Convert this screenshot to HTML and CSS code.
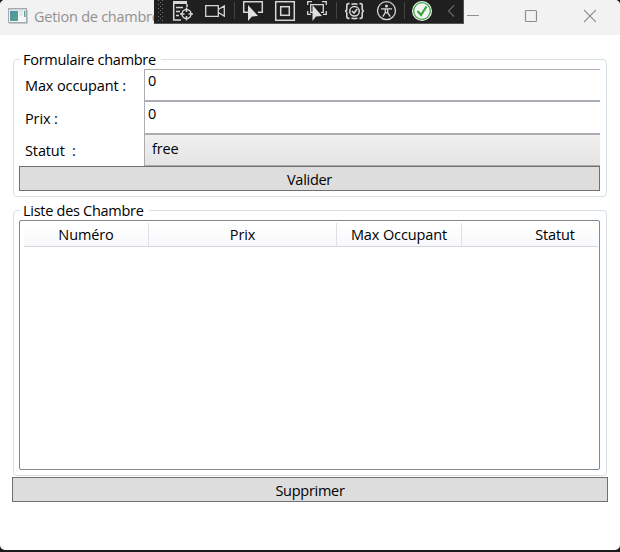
FILE: index.html
```html
<!DOCTYPE html>
<html lang="fr">
<head>
<meta charset="utf-8">
<title>Getion de chambre</title>
<link rel="stylesheet" href="styles.css">
</head>
<body>
<div class="window">
  <header class="titlebar">
    <svg class="app-icon" width="20" height="16" viewBox="0 0 20 16">
      <defs><linearGradient id="g" x1="0" y1="0" x2="1" y2="1"><stop offset="0" stop-color="#4a8fae"/><stop offset="1" stop-color="#5aa67c"/></linearGradient></defs>
      <rect x=".5" y=".5" width="18" height="14" fill="#f4f6fa" stroke="#a4a9b0"/>
      <rect x="1" y="1" width="17" height="1.5" fill="#cdd2da"/>
      <rect x="2" y="3" width="8" height="10" fill="url(#g)"/>
      <rect x="11" y="3" width="4" height="5" fill="#e3e7ee"/>
      <rect x="16" y="3" width="1.5" height="6" fill="#62a98f"/>
      <path d="M1 15.5H19.5V2" fill="none" stroke="#c4c7cb"/>
    </svg>
    <h1 class="title">Getion de chambre</h1>
    <svg class="controls" width="132" height="16" viewBox="0 0 132 16" fill="none" stroke="#8e8e8e">
      <path d="M3 7.5H15"/>
      <rect x="61.5" y="2.5" width="11" height="11" rx="1" stroke-width="1.2"/>
      <path d="M120 2L132 14M132 2L120 14" stroke-width="1.1"/>
    </svg>
  </header>
  <main class="content">
    <section class="group form-group">
      <h2 class="legend legend-form">Formulaire chambre</h2>
      <div class="form">
        <label class="label">Max occupant :</label><div class="input">0</div>
        <label class="label label-prix">Prix :</label><div class="input input-prix">0</div>
        <label class="label">Statut&nbsp; :</label><div class="select">free</div>
      </div>
      <button class="button">Valider</button>
    </section>
    <section class="group list-group">
      <h2 class="legend legend-list">Liste des Chambre</h2>
      <div class="list">
        <div class="list-head">
          <div class="col">Numéro</div>
          <div class="col">Prix</div>
          <div class="col">Max Occupant</div>
          <div class="col">Statut</div>
        </div>
      </div>
    </section>
    <button class="button remove">Supprimer</button>
  </main>
</div>
<div class="debugbar">
  <svg width="310" height="24" viewBox="154 0 310 24" fill="none" stroke="#d6d6d6" stroke-width="1.5">
    <defs><pattern id="dots" x="158" y="0" width="4" height="4" patternUnits="userSpaceOnUse"><path d="M0 0h1v1H0zM2 2h1v1H2z" fill="#777" stroke="none"/></pattern></defs>
    <rect x="158" y="0" width="6" height="22" fill="url(#dots)" stroke="none"/>
    <path d="M173 1H187V4H173Z" fill="#d6d6d6" stroke="none"/>
    <path d="M173.7 4V20H181M187 4V7M176 7.5H183M176 11.5H180M176 15.5H179"/>
    <circle cx="186.5" cy="14" r="4.5"/><path d="M186.5 7.5V12M186.5 16V20.5M180 14H184.5M188.5 14H193"/>
    <path d="M205.7 5.7H218.3V16.3H205.7ZM218.3 9.5L224.3 6V16L218.3 12.5" stroke-width="1.3"/>
    <path d="M234.5 2V19M336.5 2V19M404.5 2V19" stroke="#434343" stroke-width="1"/>
    <path d="M249 12.3H243.7V1.7H262.3V12.3H258"/>
    <path d="M248 5V21L252 16.5L258 16Z" fill="#e0e0e0" stroke="none"/>
    <rect x="275.7" y="1.7" width="18.6" height="18.6"/><rect x="280.7" y="6.7" width="8.6" height="8.6"/>
    <path d="M307.7 5V1.7H312M322 1.7H326.3V5M307.7 11V14.3H311M326.3 11V14.3H323M313 12.3H310.7V4.7H323.3V12.3H321" stroke-width="1.3"/>
    <path d="M312.5 5V21L316 16.5L322 16Z" fill="#e0e0e0" stroke="none"/>
    <path d="M349.5 3.6H348.5Q346.8 3.6 346.8 5.5V8.5Q346.8 11 345 11Q346.8 11 346.8 13.5V16.5Q346.8 18.4 348.5 18.4H349.5M359.5 3.6H360.5Q362.2 3.6 362.2 5.5V8.5Q362.2 11 364 11Q362.2 11 362.2 13.5V16.5Q362.2 18.4 360.5 18.4H359.5" stroke-width="1.6"/>
    <circle cx="354.5" cy="11.3" r="4.8" stroke-width="1.5"/>
    <path d="M352 11L354 13L357.2 9M351.5 4.5Q354.5 3 357.5 4.5M351.5 18Q354.5 19.3 357.5 18" stroke-width="1.6"/>
    <circle cx="386.5" cy="10.7" r="9" stroke-width="1.3"/><circle cx="386.5" cy="6" r="1.5" fill="#d6d6d6" stroke="none"/>
    <path d="M381 8.8H392M385.3 9V12.5L382.8 16.6M387.7 9V12.5L390.2 16.6M385 12.8H388" stroke-width="1.3"/>
    <circle cx="422" cy="11" r="10" fill="#f1f4f0" stroke="none"/><circle cx="422" cy="11" r="8.3" stroke="#42a447" stroke-width="1.3"/>
    <path d="M417.5 11L421 15L426.5 6.5" stroke="#36a33b" stroke-width="2.2"/>
    <path d="M454 5.5L448.5 11L454 16.5" stroke="#666" stroke-width="1.2"/>
  </svg>
</div>
</body>
</html>
```
FILE: styles.css
```css
* { box-sizing: border-box; }
body {
  margin: 0;
  height: 552px;
  overflow: hidden;
  background: #1c1c20;
  color: #000;
  font: 14.5px/20px "Open Sans", "Noto Sans", sans-serif;
  letter-spacing: -0.12px;
}
h1, h2 { margin: 0; font: inherit; }
.window {
  height: 550px;
  background: #fff;
  border-radius: 5px;
  overflow: hidden;
}
.titlebar {
  display: flex;
  height: 35px;
  padding: 8px 24px 0 8px;
  background: #f2f2f2;
}
.title {
  margin: -1px auto 0 6px;
  color: #919191;
  letter-spacing: -0.25px;
}
.content { padding: 24px 12px 0; }
.group {
  position: relative;
  margin: 0 0 0 1px;
  width: 594px;
  border: 1px solid #d5dfe5;
  border-radius: 4px;
}
.form-group { height: 138px; padding: 9px 6px 0 5px; }
.list-group { height: 266px; margin-top: 13px; padding: 9px 6px 0 5px; }
.legend {
  position: absolute;
  top: -9px;
  left: 6px;
  padding-left: 3px;
  background: #fff;
  line-height: 18px;
  letter-spacing: -0.28px;
  white-space: nowrap;
}
.legend-form { width: 141px; }
.legend-list { width: 129px; }
.form {
  display: grid;
  grid-template-columns: 125px 1fr;
  grid-template-rows: 32px 33px 32px;
}
.label { padding: 7px 0 0 6px; white-space: pre; }
.label-prix { padding-top: 8px; }
.input {
  padding: 1px 0 0 3px;
  border: 1px solid #abadb3;
  border-right: 0;
}
.input-prix { padding-top: 2px; }
.select {
  padding: 4px 0 0 7px;
  border: 1px solid #acacac;
  border-right: 0;
  background: linear-gradient(#f0f0f0, #e5e5e5);
}
.button {
  display: block;
  width: 100%;
  height: 25px;
  padding: 2px 0 0;
  border: 1px solid #707070;
  border-radius: 0;
  background: #ddd;
  color: inherit;
  font: inherit;
  letter-spacing: -0.28px;
}
.remove { margin-top: 1px; }
.list {
  height: 250px;
  padding: 2px 1px 0 4px;
  border: 1px solid #828790;
  border-radius: 2px;
}
.list-head {
  display: grid;
  grid-template-columns: 125px 188px 125px 187px;
  height: 24px;
  overflow: hidden;
  border-bottom: 1px solid #d5d5d5;
  background: linear-gradient(#fff, #f7f8fa);
}
.col {
  padding-top: 2px;
  border-right: 1px solid #dfe1e4;
  text-align: center;
  white-space: nowrap;
}
.debugbar {
  position: absolute;
  top: 0;
  left: 154px;
  width: 310px;
  height: 24px;
  border: solid #555;
  border-width: 0 1px 1px 0;
  background: #1f1f1f;
  overflow: hidden;
}
.debugbar svg { display: block; }
```
